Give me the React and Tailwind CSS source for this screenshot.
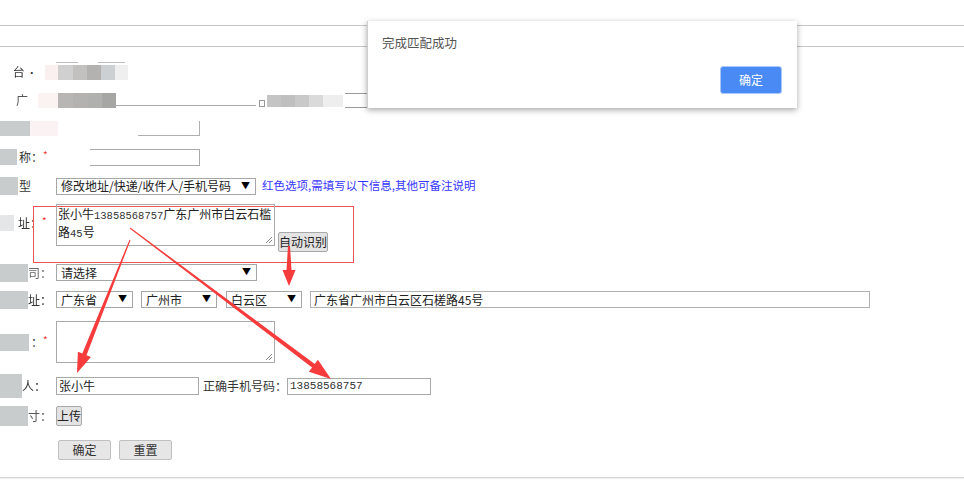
import React from "react";

function arrowPts(x1, y1, x2, y2, w1, w2, hl, hw) {
  const dx = x2 - x1, dy = y2 - y1;
  const len = Math.hypot(dx, dy);
  const ux = dx / len, uy = dy / len;
  const nx = -uy, ny = ux;
  const bx = x2 - ux * hl, by = y2 - uy * hl;
  const p = [
    [x1 + nx * w1 / 2, y1 + ny * w1 / 2],
    [bx + nx * w2 / 2, by + ny * w2 / 2],
    [bx + nx * hw / 2, by + ny * hw / 2],
    [x2, y2],
    [bx - nx * hw / 2, by - ny * hw / 2],
    [bx - nx * w2 / 2, by - ny * w2 / 2],
    [x1 - nx * w1 / 2, y1 - ny * w1 / 2],
  ];
  return p.map((q) => q[0].toFixed(1) + "," + q[1].toFixed(1)).join(" ");
}

function Select({ w, text, className = "" }) {
  return (
    <div
      className={`relative flex h-[17px] shrink-0 items-center border border-[#a6a6a6] bg-white pl-[4px] text-[12px] leading-none text-[#222] ${w} ${className}`}
    >
      <span>{text}</span>
      <span className="absolute right-[5px] top-[2px] text-[9px] text-black">▼</span>
    </div>
  );
}

function Btn({ children, className = "" }) {
  return (
    <div
      className={`flex shrink-0 items-center justify-center rounded-[2px] border border-[#a9a9a9] bg-[#e3e3e3] text-[12px] leading-none text-[#222] ${className}`}
    >
      {children}
    </div>
  );
}

function Gray({ className = "" }) {
  return <div className={`shrink-0 bg-[#c9cccd] ${className}`} />;
}

export default function App() {
  const font = {
    fontFamily:
      '"Noto Sans CJK SC", "Noto Sans", "Liberation Sans", sans-serif',
  };
  return (
    <div
      className="relative h-[484px] w-[964px] overflow-hidden bg-white text-[12px] text-[#333]"
      style={font}
    >
      <div className="flex flex-col">
        <div className="h-[25px]" />
        <div className="h-[22px] border-y border-[#c6c6c6]" />
        <div className="h-[11px]" />

        {/* Row 1 */}
        <div className="flex h-[28px] items-center">
          <div className="flex w-[58px] shrink-0 items-center">
            <div className="w-[17px]" />
            <span className="blur-[0.3px]">台</span>
            <span className="ml-[2px] text-[10px]">·</span>
            <div className="ml-[8px] h-[15px] w-[18px] bg-[#fbf0f0]" />
          </div>
          <div className="relative flex h-[15px] items-stretch">
            <div className="absolute -top-[3px] left-[-2px] h-px w-[22px] bg-[#bdbdbd]" />
            <div className="absolute -top-[3px] left-[40px] h-px w-[27px] bg-[#bdbdbd]" />
            <div className="w-[15px] bg-[#d0d0d0]" />
            <div className="w-[14px] bg-[#c3c1c0]" />
            <div className="w-[14px] bg-[#b4b2b1]" />
            <div className="w-[14px] bg-[#cdd0d2]" />
            <div className="w-[13px] bg-[#efefef]" />
          </div>
        </div>

        {/* Row 2 */}
        <div className="flex h-[28px] items-center">
          <div className="flex w-[58px] shrink-0 items-center">
            <div className="w-[16px]" />
            <span className="blur-[0.6px] text-[#555]">广</span>
            <div className="ml-[10px] h-[15px] w-[20px] bg-[#fbf2f2]" />
          </div>
          <div className="flex h-[15px] items-stretch">
            <div className="w-[15px] bg-[#b8b6b5]" />
            <div className="w-[15px] bg-[#b3b2b0]" />
            <div className="w-[14px] bg-[#b0b0ae]" />
            <div className="w-[14px] bg-[#a6a6a4]" />
          </div>
          <div className="mt-[10px] h-px w-[140px] bg-[#aaaaaa]" />
          <div className="ml-[3px] mt-[6px] h-[7px] w-[6px] border border-[#999]" />
          <div className="ml-[2px] mt-[2px] flex h-[12px] items-stretch">
            <div className="w-[14px] bg-[#c4c4c4]" />
            <div className="w-[14px] bg-[#bfbfbf]" />
            <div className="w-[14px] bg-[#c9c9c9]" />
            <div className="w-[14px] bg-[#dadada]" />
            <div className="w-[20px] bg-[#eeeeee]" />
          </div>
          <div className="ml-[2px] h-[15px] w-[30px] border-y border-[#9a9a9a]" />
        </div>

        {/* Row 3 */}
        <div className="flex h-[28px] items-center">
          <div className="flex w-[58px] shrink-0 items-center">
            <Gray className="h-[15px] w-[30px]" />
            <div className="h-[15px] w-[28px] bg-[#fbf3f3]" />
          </div>
          <div className="relative ml-[80px] h-[15px] w-[62px] border-b border-r border-[#b0b0b0]" />
        </div>

        {/* Row 4 */}
        <div className="flex h-[30px] items-center">
          <div className="flex w-[58px] shrink-0 items-center">
            <Gray className="h-[16px] w-[17px]" />
            <span className="ml-[2px]">称</span>
            <span>：</span>
            <span className="-mt-[6px] text-[10px] text-[#e33]">*</span>
          </div>
          <div className="ml-[32px] h-[17px] w-[110px] border border-l-0 border-[#a9a9a9]" />
        </div>

        {/* Row 5 */}
        <div className="flex h-[28px] items-center">
          <div className="flex w-[56px] shrink-0 items-center">
            <Gray className="h-[18px] w-[18px]" />
            <span className="ml-[1px]">型</span>
          </div>
          <Select w="w-[200px]" text="修改地址/快递/收件人/手机号码" />
          <span className="ml-[6px] text-[11.5px] text-[#3434ff]">
            红色选项,需填写以下信息,其他可备注说明
          </span>
        </div>

        {/* Row 6 */}
        <div className="relative flex h-[63px] items-start">
          <div className="absolute left-[33px] top-[6px] h-[57px] w-[321px] border border-[#f05555]" />
          <div className="flex h-[46px] w-[56px] shrink-0 items-center">
            <Gray className="h-[16px] w-[14px] bg-[#e4e6e7]" />
            <span className="ml-[4px] blur-[0.3px]">址</span>
            <span>：</span>
            <span className="-mt-[6px] text-[10px] text-[#e33]">*</span>
          </div>
          <div className="relative mt-[4px] h-[42px] w-[219px] overflow-hidden border border-[#a9a9a9] pl-[1px] pt-[1px] text-[12px] leading-[16px] text-[#222]">
            <div className="whitespace-nowrap">
              张小牛<span className="font-['Liberation_Mono'] text-[10.5px] text-[#333]">13858568757</span>广东广州市白云石槛
            </div>
            <div className="whitespace-nowrap">
              路<span className="font-['Liberation_Mono'] text-[10.5px] text-[#333]">45</span>号
            </div>
            <svg className="absolute bottom-[1px] right-[1px]" width="8" height="8" viewBox="0 0 8 8">
              <path d="M7 1L1 7M7 4L4 7" stroke="#888" strokeWidth="1" />
            </svg>
          </div>
          <Btn className="ml-[3px] mt-[32px] h-[20px] w-[50px]">自动识别</Btn>
        </div>

        {/* Row 7 */}
        <div className="flex h-[19px] items-center">
          <div className="flex w-[56px] shrink-0 items-center">
            <Gray className="h-[18px] w-[28px]" />
            <span className="blur-[0.5px] text-[#666]">司：</span>
          </div>
          <Select w="w-[201px]" text="请选择" />
        </div>

        {/* Row 8 */}
        <div className="flex h-[35px] items-center">
          <div className="flex w-[56px] shrink-0 items-center">
            <Gray className="h-[18px] w-[28px]" />
            <span className="blur-[0.4px]">址：</span>
          </div>
          <Select w="w-[77px]" text="广东省" />
          <Select w="w-[76px]" className="ml-[8px]" text="广州市" />
          <Select w="w-[76px]" className="ml-[9px]" text="白云区" />
          <div className="ml-[8px] flex h-[17px] w-[560px] items-center border border-[#b0b0b0] pl-[3px] text-[12px] leading-none text-[#222]">
            广东省广州市白云区石槎路45号
          </div>
        </div>

        {/* Row 9 */}
        <div className="flex h-[50px] items-start">
          <div className="flex h-[50px] w-[56px] shrink-0 items-center">
            <Gray className="h-[17px] w-[29px]" />
            <span className="ml-[2px]">：</span>
            <span className="-mt-[6px] text-[10px] text-[#e33]">*</span>
          </div>
          <div className="relative mt-[4px] h-[42px] w-[219px] border border-[#a9a9a9]">
            <svg className="absolute bottom-[1px] right-[1px]" width="8" height="8" viewBox="0 0 8 8">
              <path d="M7 1L1 7M7 4L4 7" stroke="#888" strokeWidth="1" />
            </svg>
          </div>
        </div>

        {/* Row 10 */}
        <div className="flex h-[37px] items-center">
          <div className="flex w-[56px] shrink-0 items-center">
            <Gray className="h-[24px] w-[22px]" />
            <span className="blur-[0.3px]">人：</span>
          </div>
          <div className="flex h-[18px] w-[143px] items-center border border-[#a9a9a9] pl-[2px] text-[12px] leading-none text-[#222]">
            张小牛
          </div>
          <span className="ml-[4px] text-[12px] text-[#333]">正确手机号码：</span>
          <div className="mt-[2px] flex h-[17px] w-[144px] items-center border border-[#a9a9a9] pl-[2px] font-['Liberation_Mono'] text-[11px] leading-none text-[#333]">
            13858568757
          </div>
        </div>

        {/* Row 11 */}
        <div className="flex h-[24px] items-center">
          <div className="flex w-[56px] shrink-0 items-center">
            <Gray className="h-[20px] w-[28px]" />
            <span className="blur-[0.5px] text-[#555]">寸：</span>
          </div>
          <Btn className="h-[20px] w-[26px] border-[#9a9a9a]">上传</Btn>
        </div>

        {/* Row 12 */}
        <div className="flex h-[44px] items-center">
          <div className="w-[58px] shrink-0" />
          <Btn className="h-[20px] w-[53px] border-[#c0c0c0] bg-[#e6e6e6] text-[#333]">确定</Btn>
          <Btn className="ml-[8px] h-[20px] w-[53px] border-[#c0c0c0] bg-[#e6e6e6] text-[#333]">重置</Btn>
        </div>

        <div className="h-[5px]" />
        <div className="h-[2px] border-t border-[#d6d6d6] bg-[#eeeeee]" />
      </div>

      {/* Arrows */}
      <svg className="pointer-events-none absolute left-0 top-0" width="964" height="484">
        <polygon points={arrowPts(130, 240, 77, 373, 1, 4.5, 20, 14)} fill="#f53b3b" />
        <polygon points={arrowPts(130, 228, 331, 379, 1, 4.5, 22, 15)} fill="#f53b3b" />
        <polygon points={arrowPts(289, 246, 289, 286, 2, 5, 16, 13)} fill="#f53b3b" />
      </svg>

      {/* Dialog */}
      <div className="absolute left-[367px] top-[21px] h-[87px] w-[430px] border-l border-[#cfcfcf] bg-white shadow-[0_2px_6px_rgba(0,0,0,0.35)]">
        <div className="pl-[14px] pt-[13px] text-[12.5px] text-[#555]">完成匹配成功</div>
        <div className="absolute bottom-[14px] right-[15px] flex h-[28px] w-[62px] items-center justify-center rounded-[3px] border border-[#a9c7fa] bg-[#4a8af4] text-[12px] text-white">
          确定
        </div>
      </div>
    </div>
  );
}
